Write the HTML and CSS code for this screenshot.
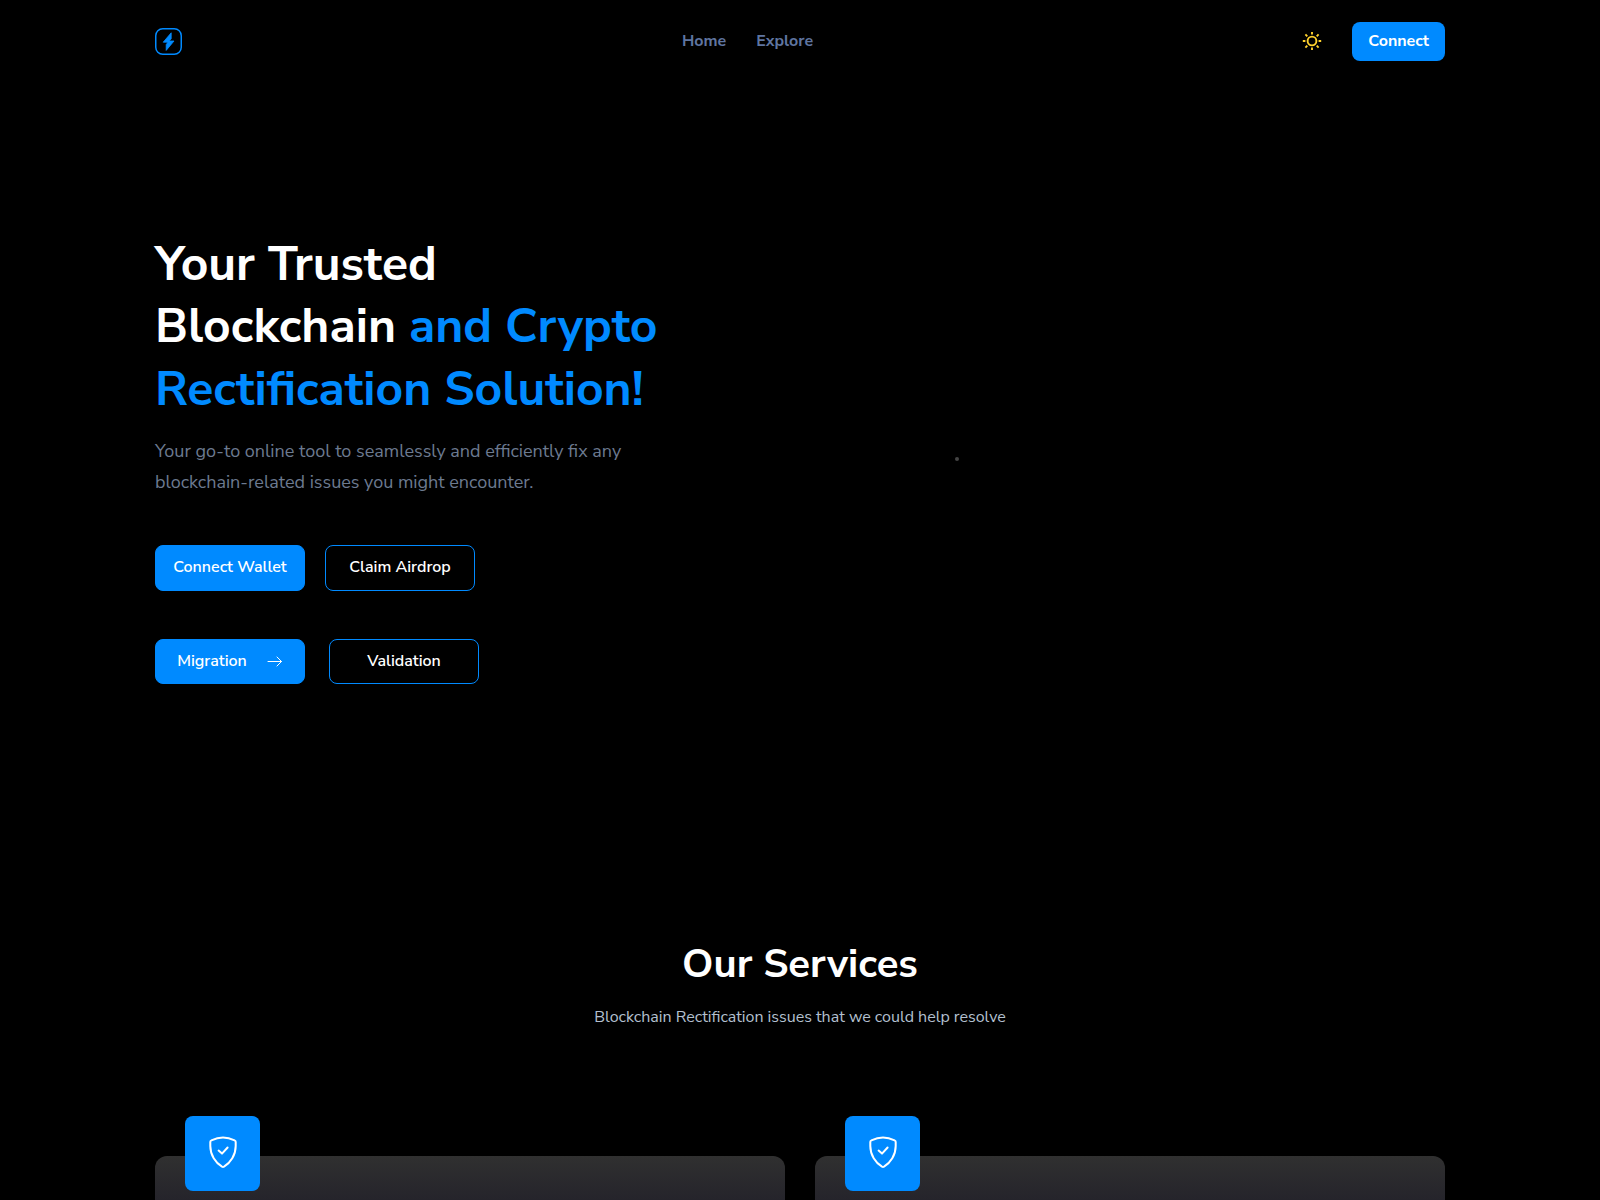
FILE: index.html
```html
<!DOCTYPE html>
<html lang="en">
  <head>
    <meta charset="utf-8">
    <meta name="viewport" content="width=device-width, initial-scale=1">
    <title>Blockchain Rectification</title>
    <link rel="stylesheet" href="styles.css">
  </head>
  <body>
    <header class="header container">
      <a class="logo" href="#" aria-label="Home page">
        <svg width="27" height="27" viewBox="0 0 27 27" fill="none">
          <rect x="0.75" y="0.75" width="25.5" height="25.5" rx="7" stroke="currentColor" stroke-width="1.5"/>
          <path d="M16.2 4.8V10.8L14.2 13H19L11.2 22.4V16.6L13 14.2H8.2Z" fill="currentColor" stroke="currentColor" stroke-width="0.8" stroke-linejoin="round"/>
        </svg>
      </a>
      <nav class="menu">
        <a href="#">Home</a>
        <a href="#services">Explore</a>
      </nav>
      <div class="actions">
        <button class="theme" type="button" aria-label="Switch theme">
          <svg width="20" height="20" viewBox="0 0 20 20" fill="none" stroke="currentColor" stroke-width="1.9">
            <circle cx="10" cy="10" r="4.4"/>
            <path d="M10 1v2.5M10 16.5V19M0.8 10h2.6M16.6 10h2.6M3.4 3.4l1.9 1.9M14.7 14.7l1.9 1.9M3.4 16.6l1.9-1.9M14.7 5.3l1.9-1.9"/>
          </svg>
        </button>
        <button class="connect" type="button">Connect</button>
      </div>
    </header>

    <main class="main">
      <section class="hero container">
        <div class="intro">
          <h1>Your Trusted<br>Blockchain <span>and Crypto<br>Rectification Solution!</span></h1>
          <p>Your go-to online tool to seamlessly and efficiently fix any<br>blockchain-related issues you might encounter.</p>
          <div class="row">
            <button class="button" type="button">Connect Wallet</button>
            <button class="button outline" type="button">Claim Airdrop</button>
          </div>
          <div class="row second">
            <button class="button" type="button">
              Migration
              <svg width="16" height="12" viewBox="0 0 16 12" fill="none" stroke="currentColor" stroke-linecap="round" stroke-linejoin="round">
                <path d="M1 6.5h13.5M10 2L14.5 6.5 10 11"/>
              </svg>
            </button>
            <button class="button outline" type="button">Validation</button>
          </div>
        </div>
        <div class="slider"><span class="dot"></span></div>
      </section>

      <section class="services container" id="services">
        <h2>Our Services</h2>
        <p>Blockchain Rectification issues that we could help resolve</p>
        <div class="cards">
          <div class="card">
            <div class="icon">
              <svg width="28" height="32" viewBox="0 0 28 32" fill="none" stroke="currentColor" stroke-width="2" stroke-linecap="round" stroke-linejoin="round">
                <path d="M14 1.5C10 1.5 6 2.6 2.4 4.3C1.7 4.6 1.3 5.2 1.3 6V10C1.3 19 6.5 26.8 13 30.7Q14 31.2 15 30.7C21.5 26.8 26.7 19 26.7 10V6C26.7 5.2 26.3 4.6 25.6 4.3C22 2.6 18 1.5 14 1.5Z"/>
                <path d="M9.6 14.6L13 17.6L18.6 11.5"/>
              </svg>
            </div>
          </div>
          <div class="card">
            <div class="icon">
              <svg width="28" height="32" viewBox="0 0 28 32" fill="none" stroke="currentColor" stroke-width="2" stroke-linecap="round" stroke-linejoin="round">
                <path d="M14 1.5C10 1.5 6 2.6 2.4 4.3C1.7 4.6 1.3 5.2 1.3 6V10C1.3 19 6.5 26.8 13 30.7Q14 31.2 15 30.7C21.5 26.8 26.7 19 26.7 10V6C26.7 5.2 26.3 4.6 25.6 4.3C22 2.6 18 1.5 14 1.5Z"/>
                <path d="M9.6 14.6L13 17.6L18.6 11.5"/>
              </svg>
            </div>
          </div>
        </div>
      </section>
    </main>
  </body>
</html>
```

FILE: styles.css
```css
* {
  box-sizing: border-box;
}

body {
  margin: 0;
  min-height: 100vh;
  display: flex;
  flex-direction: column;
  background-color: #000;
  color: #fff;
  font-family: "Nunito Sans", Nunito, Lato, sans-serif;
  font-size: 16px;
}

h1, h2, p {
  margin: 0;
}

a {
  text-decoration: none;
}

button {
  font: inherit;
  color: #fff;
  cursor: pointer;
}

svg {
  display: block;
}

.container {
  width: 100%;
  max-width: 1320px;
  margin: 0 auto;
  padding: 0 15px;
}

.header {
  display: grid;
  grid-template-columns: 1fr auto 1fr;
  align-items: center;
  height: 83px;
}

.logo {
  color: #008aff;
  justify-self: start;
}

.menu {
  display: flex;
  gap: 30px;
  margin-right: 105px;
  padding-bottom: 2px;
}

.menu a {
  color: #5f75a0;
  font-weight: 700;
}

.actions {
  display: flex;
  justify-content: flex-end;
  align-items: center;
  gap: 30px;
}

.theme {
  padding: 0 0 2px;
  border: 0;
  background: none;
  color: #ffd22e;
}

.connect {
  height: 39px;
  padding: 0 16px 2px;
  border: 0;
  border-radius: 8px;
  background-color: #008aff;
  font-weight: 700;
}

.main {
  flex: 1;
  display: flex;
  flex-direction: column;
}

.hero {
  display: grid;
  grid-template-columns: 1fr 1fr;
  padding-top: 150px;
  padding-bottom: 250px;
}

h1 {
  font-size: 48px;
  line-height: 1.3;
  font-weight: 700;
  white-space: nowrap;
}

h1 span {
  color: #008aff;
}

.intro p {
  margin-top: 16px;
  color: #6c7a90;
  font-size: 18px;
  line-height: 31px;
}

.row {
  display: flex;
  gap: 20px;
  margin-top: 47px;
}

.second {
  gap: 24px;
  margin-top: 48px;
}

.button {
  display: flex;
  align-items: center;
  justify-content: center;
  gap: 20px;
  width: 150px;
  height: 46px;
  padding: 0 0 2px;
  border: 1px solid #008aff;
  border-radius: 8px;
  background-color: #008aff;
  font-weight: 600;
}

.second .button {
  height: 45px;
}

.outline {
  background-color: transparent;
}

.slider {
  display: flex;
  padding: 224px 0 0 155px;
}

.dot {
  width: 4px;
  height: 4px;
  border-radius: 50%;
  background-color: #444;
}

.services {
  flex: 1;
  display: flex;
  flex-direction: column;
  text-align: center;
}

h2 {
  font-size: 40px;
  line-height: 60px;
  font-weight: 700;
}

.services p {
  margin-top: 10px;
  color: #b4c0d0;
  line-height: 26px;
}

.cards {
  flex: 1;
  display: grid;
  grid-template-columns: 1fr 1fr;
  gap: 30px;
  margin-top: 126px;
}

.card {
  padding: 0 30px;
  border-radius: 12px 12px 0 0;
  background: linear-gradient(#303030, #25242b 44px);
}

.icon {
  display: flex;
  align-items: center;
  justify-content: center;
  width: 75px;
  height: 75px;
  margin-top: -40px;
  margin-bottom: 9px;
  padding-bottom: 4px;
  border-radius: 8px;
  background-color: #008aff;
}
```
